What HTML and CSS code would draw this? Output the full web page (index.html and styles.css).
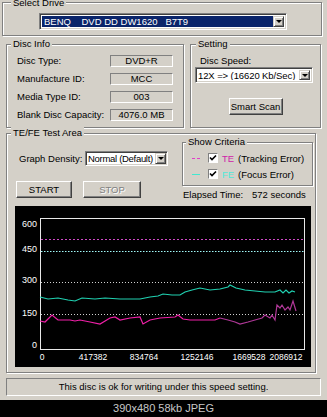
FILE: index.html
```html
<!DOCTYPE html>
<html>
<head>
<meta charset="utf-8">
<link rel="stylesheet" href="styles.css">
</head>
<body>
<div class="window">
  <div class="group drive">
    <span class="legend lg-drive">Select Drive</span>
    <div class="combo combo-drive sel">
      <div class="val">BENQ&nbsp;&nbsp;&nbsp; DVD DD DW1620&nbsp;&nbsp; B7T9</div>
      <div class="dbtn"><span class="arrow"></span></div>
    </div>
  </div>

  <div class="row2">
    <div class="group info">
      <span class="legend">Disc Info</span>
      <div class="kv">
        <div class="k">Disc Type:</div><div class="box">DVD+R</div>
        <div class="k">Manufacture ID:</div><div class="box">MCC</div>
        <div class="k">Media Type ID:</div><div class="box">003</div>
        <div class="k">Blank Disc Capacity:</div><div class="box">4076.0 MB</div>
      </div>
    </div>
    <div class="group setting">
      <span class="legend lg-setting">Setting</span>
      <div class="speed-label">Disc Speed:</div>
      <div class="combo combo-speed">
        <div class="val">12X =&gt; (16620 Kb/Sec)</div>
        <div class="dbtn"><span class="arrow"></span></div>
      </div>
      <div class="button smart">Smart Scan</div>
    </div>
  </div>

  <div class="group test">
    <span class="legend">TE/FE Test Area</span>
    <div class="top">
      <div class="leftcol">
        <div class="density">
          <span class="dlabel">Graph Density:</span>
          <div class="combo combo-density">
            <div class="val">Normal (Default)</div>
            <div class="dbtn"><span class="arrow"></span></div>
          </div>
        </div>
        <div class="buttons">
          <div class="button start">START</div>
          <div class="button stop disabled">STOP</div>
        </div>
      </div>
      <div class="rightcol">
        <div class="group criteria">
          <span class="legend lg-criteria">Show Criteria</span>
          <div class="crow">
            <span class="swatch te-dash"></span>
            <span class="check"><svg width="8" height="8" viewBox="0 0 8 8"><path d="M1 3.5 L3 5.5 L7 1.5" fill="none" stroke="#000" stroke-width="1.6"/></svg></span>
            <span class="code te">TE</span>
            <span>(Tracking Error)</span>
          </div>
          <div class="crow">
            <span class="swatch fe-line"></span>
            <span class="check"><svg width="8" height="8" viewBox="0 0 8 8"><path d="M1 3.5 L3 5.5 L7 1.5" fill="none" stroke="#000" stroke-width="1.6"/></svg></span>
            <span class="code fe">FE</span>
            <span>(Focus Error)</span>
          </div>
        </div>
        <div class="elapsed">
          <span class="elabel">Elapsed Time:</span>
          <span>572 seconds</span>
        </div>
      </div>
    </div>
    <div class="chart">
      <svg width="296" height="161" viewBox="0 0 296 161">
        <rect x="25.5" y="12.5" width="264" height="131" fill="none" stroke="#e8e8e8" stroke-width="1"/>
        <line x1="26" y1="33.5" x2="289" y2="33.5" stroke="#d048c8" stroke-width="1.2" stroke-dasharray="2 2"/>
        <line x1="26" y1="45.5" x2="289" y2="45.5" stroke="#a0f8f8" stroke-dasharray="1.5 1.5"/>
        <line x1="26" y1="76.5" x2="289" y2="76.5" stroke="#d0d0d0" stroke-dasharray="1 2"/>
        <line x1="26" y1="108.5" x2="289" y2="108.5" stroke="#d0d0d0" stroke-dasharray="1 2"/>
        <polyline fill="none" stroke="#20d0b0" stroke-width="1.2" points="25,91 33,93 43,92 53,94 60,95 67,92 80,93 90,92 105,93 125,93 135,91 143,90 148,88 157,89 165,89 170,86 177,84 185,82 195,84 205,83 213,81 215,79 221,82 230,84 240,85 250,86 260,86 265,84 268,87 271,84 274,87 277,85 280,86"/>
        <polyline fill="none" stroke="#f020a8" stroke-width="1.2" points="25,115 30,116 37,109 43,114 55,114 60,115 65,114 75,116 85,118 95,112 100,111 105,114 115,112 125,111 128,118 135,114 145,112 160,111 163,109 168,113 175,114 200,114 205,112"/>
        <polyline fill="none" stroke="#b03898" stroke-width="1.2" points="205,112 213,114 220,116 225,118 233,116 240,114 247,112 250,109 255,112 257,109 260,114 262,99 265,102 267,99 270,104 273,101 275,104 278,95 281,105"/>
        <g class="axis ylab">
          <text x="22" y="20.5" text-anchor="end">600</text>
          <text x="22" y="45.5" text-anchor="end">450</text>
          <text x="22" y="76.5" text-anchor="end">300</text>
          <text x="22" y="109.5" text-anchor="end">150</text>
          <text x="22" y="141.5" text-anchor="end">0</text>
        </g>
        <g class="axis xlab">
          <text x="27" y="153.5" text-anchor="middle">0</text>
          <text x="78" y="153.5" text-anchor="middle">417382</text>
          <text x="129" y="153.5" text-anchor="middle">834764</text>
          <text x="182" y="153.5" text-anchor="middle">1252146</text>
          <text x="234" y="153.5" text-anchor="middle">1669528</text>
          <text x="271" y="153.5" text-anchor="middle">2086912</text>
        </g>
      </svg>
    </div>
  </div>

  <div class="status">This disc is ok for writing under this speed setting.</div>
</div>
<div class="caption">390x480 58kb JPEG</div>
</body>
</html>
```

FILE: styles.css
```css
* { box-sizing: border-box; }
html, body { margin: 0; padding: 0; }
body {
  width: 327px;
  height: 417px;
  overflow: hidden;
  background: #000;
  font-family: "Liberation Sans", Arial, sans-serif;
  font-size: 9.5px;
  color: #000;
}
.window {
  height: 400px;
  background: #d4d0c8;
  padding-top: 2px;
  overflow: hidden;
  display: flex;
  flex-direction: column;
}
.group {
  border: 1px solid #808080;
  box-shadow: inset 1px 1px 0 #fff, 1px 1px 0 #fff;
  display: flex;
  flex-direction: column;
  flex: none;
}
.legend {
  display: block;
  width: fit-content;
  height: 11px;
  line-height: 11px;
  margin: -7px 0 0 4px;
  padding: 0 2px;
  background: #d4d0c8;
  white-space: nowrap;
}
.lg-drive { margin-top: -6px; margin-left: 8px; }
.lg-setting { margin-left: 5px; }
.lg-criteria { margin-left: 3px; }

/* combo boxes */
.combo {
  display: flex;
  background: #fff;
  border: 1px solid;
  border-color: #808080 #fff #fff #808080;
  box-shadow: inset 1px 1px 0 #404040, inset -1px -1px 0 #d4d0c8;
  padding: 2px;
}
.combo .val {
  flex: 1;
  min-width: 0;
  padding-left: 2px;
  white-space: nowrap;
  overflow: hidden;
  display: flex;
  align-items: center;
}
.combo.sel .val {
  background: #0a246a;
  color: #fff;
}
.dbtn {
  flex: none;
  width: 11px;
  background: #d4d0c8;
  border: 1px solid;
  border-color: #d4d0c8 #404040 #404040 #d4d0c8;
  box-shadow: inset 1px 1px 0 #fff, inset -1px -1px 0 #808080;
  display: flex;
  align-items: center;
  justify-content: center;
}
.arrow {
  width: 0;
  height: 0;
  border-left: 3px solid transparent;
  border-right: 3px solid transparent;
  border-top: 3px solid #000;
}

/* buttons */
.button {
  background: #d4d0c8;
  border: 1px solid;
  border-color: #fff #404040 #404040 #fff;
  box-shadow: inset -1px -1px 0 #808080;
  display: flex;
  align-items: center;
  justify-content: center;
  white-space: nowrap;
}
.button.disabled {
  color: #808080;
  text-shadow: 1px 1px 0 #fff;
}

/* select drive */
.drive {
  margin: 0 5px 0 2px;
  height: 34px;
}
.combo-drive {
  margin: 5px 0 0 36px;
  width: 248px;
  height: 17px;
}

/* row 2 */
.row2 {
  display: flex;
  margin-top: 8px;
  height: 84px;
  flex: none;
}
.info {
  margin-left: 6px;
  width: 178px;
}
.kv {
  display: grid;
  grid-template-columns: 93px 63px;
  grid-auto-rows: 12px;
  row-gap: 6px;
  margin: 6px 0 0 10px;
}
.k {
  line-height: 12px;
  white-space: nowrap;
}
.box {
  height: 12px;
  border: 1px solid;
  border-color: #808080 #fff #fff #808080;
  text-align: center;
  line-height: 10px;
}
.setting {
  margin-left: 6px;
  width: 131px;
}
.speed-label {
  margin: 6px 0 0 9px;
  height: 12px;
  line-height: 12px;
}
.combo-speed {
  margin: 0 0 0 4px;
  width: 118px;
  height: 16px;
  padding-left: 1px;
}
.combo-speed .val { padding-left: 1px; letter-spacing: -0.1px; }
.smart {
  margin-top: 15px;
  align-self: center;
  width: 54px;
  height: 17px;
}

/* test area */
.test {
  margin: 5px 0 0 6px;
  width: 310px;
  height: 240px;
}
.top {
  display: flex;
  align-items: flex-start;
}
.leftcol {
  padding-left: 9px;
}
.density {
  margin-top: 13px;
  display: flex;
  align-items: center;
  height: 15px;
}
.dlabel {
  width: 66px;
  margin-left: 3px;
  white-space: nowrap;
}
.combo-density {
  width: 83px;
  height: 15px;
  padding: 1px 1px 1px 1px;
}
.combo-density .val { padding-left: 1px; letter-spacing: -0.3px; }
.buttons {
  margin-top: 15px;
  display: flex;
}
.start {
  width: 56px;
  height: 17px;
}
.stop {
  width: 58px;
  height: 17px;
  margin-left: 11px;
}
.rightcol {
  margin-left: auto;
  margin-right: 2px;
  width: 131px;
}
.criteria {
  margin-top: 4px;
  height: 44px;
}
.crow {
  display: flex;
  align-items: center;
  height: 12px;
  padding-left: 9px;
  margin-top: 4px;
  white-space: nowrap;
}
.legend + .crow { margin-top: 5px; }
.swatch {
  width: 8px;
  height: 0;
}
.te-dash { border-top: 1px dashed #e040c8; }
.fe-line { border-top: 1px solid #40e8d0; }
.check {
  width: 10px;
  height: 10px;
  margin-left: 8px;
  background: #fff;
  border: 1px solid;
  border-color: #808080 #fff #fff #808080;
  display: flex;
  align-items: center;
  justify-content: center;
}
.code {
  width: 16px;
  margin-left: 4px;
}
.te { color: #d020a8; }
.fe { color: #50e8d8; }
.elapsed {
  margin-top: 3px;
  height: 12px;
  line-height: 12px;
  display: flex;
  margin-left: 1px;
  white-space: nowrap;
}
.elabel { width: 69px; }
.chart {
  margin: 5px 0 0 8px;
  width: 296px;
  height: 161px;
  background: #000;
}
.chart svg { display: block; }
.axis text {
  fill: #fff;
  font-family: "Liberation Sans", Arial, sans-serif;
}
.ylab text { font-size: 9px; }
.xlab text { font-size: 8.5px; }

/* status */
.status {
  margin: 5px 0 0 6px;
  width: 315px;
  height: 18px;
  flex: none;
  border: 1px solid;
  border-color: #808080 #fff #fff #808080;
  text-align: center;
  line-height: 16px;
}
.caption {
  height: 17px;
  line-height: 17px;
  text-align: center;
  color: #c8c8c8;
  font-size: 11px;
}
```
